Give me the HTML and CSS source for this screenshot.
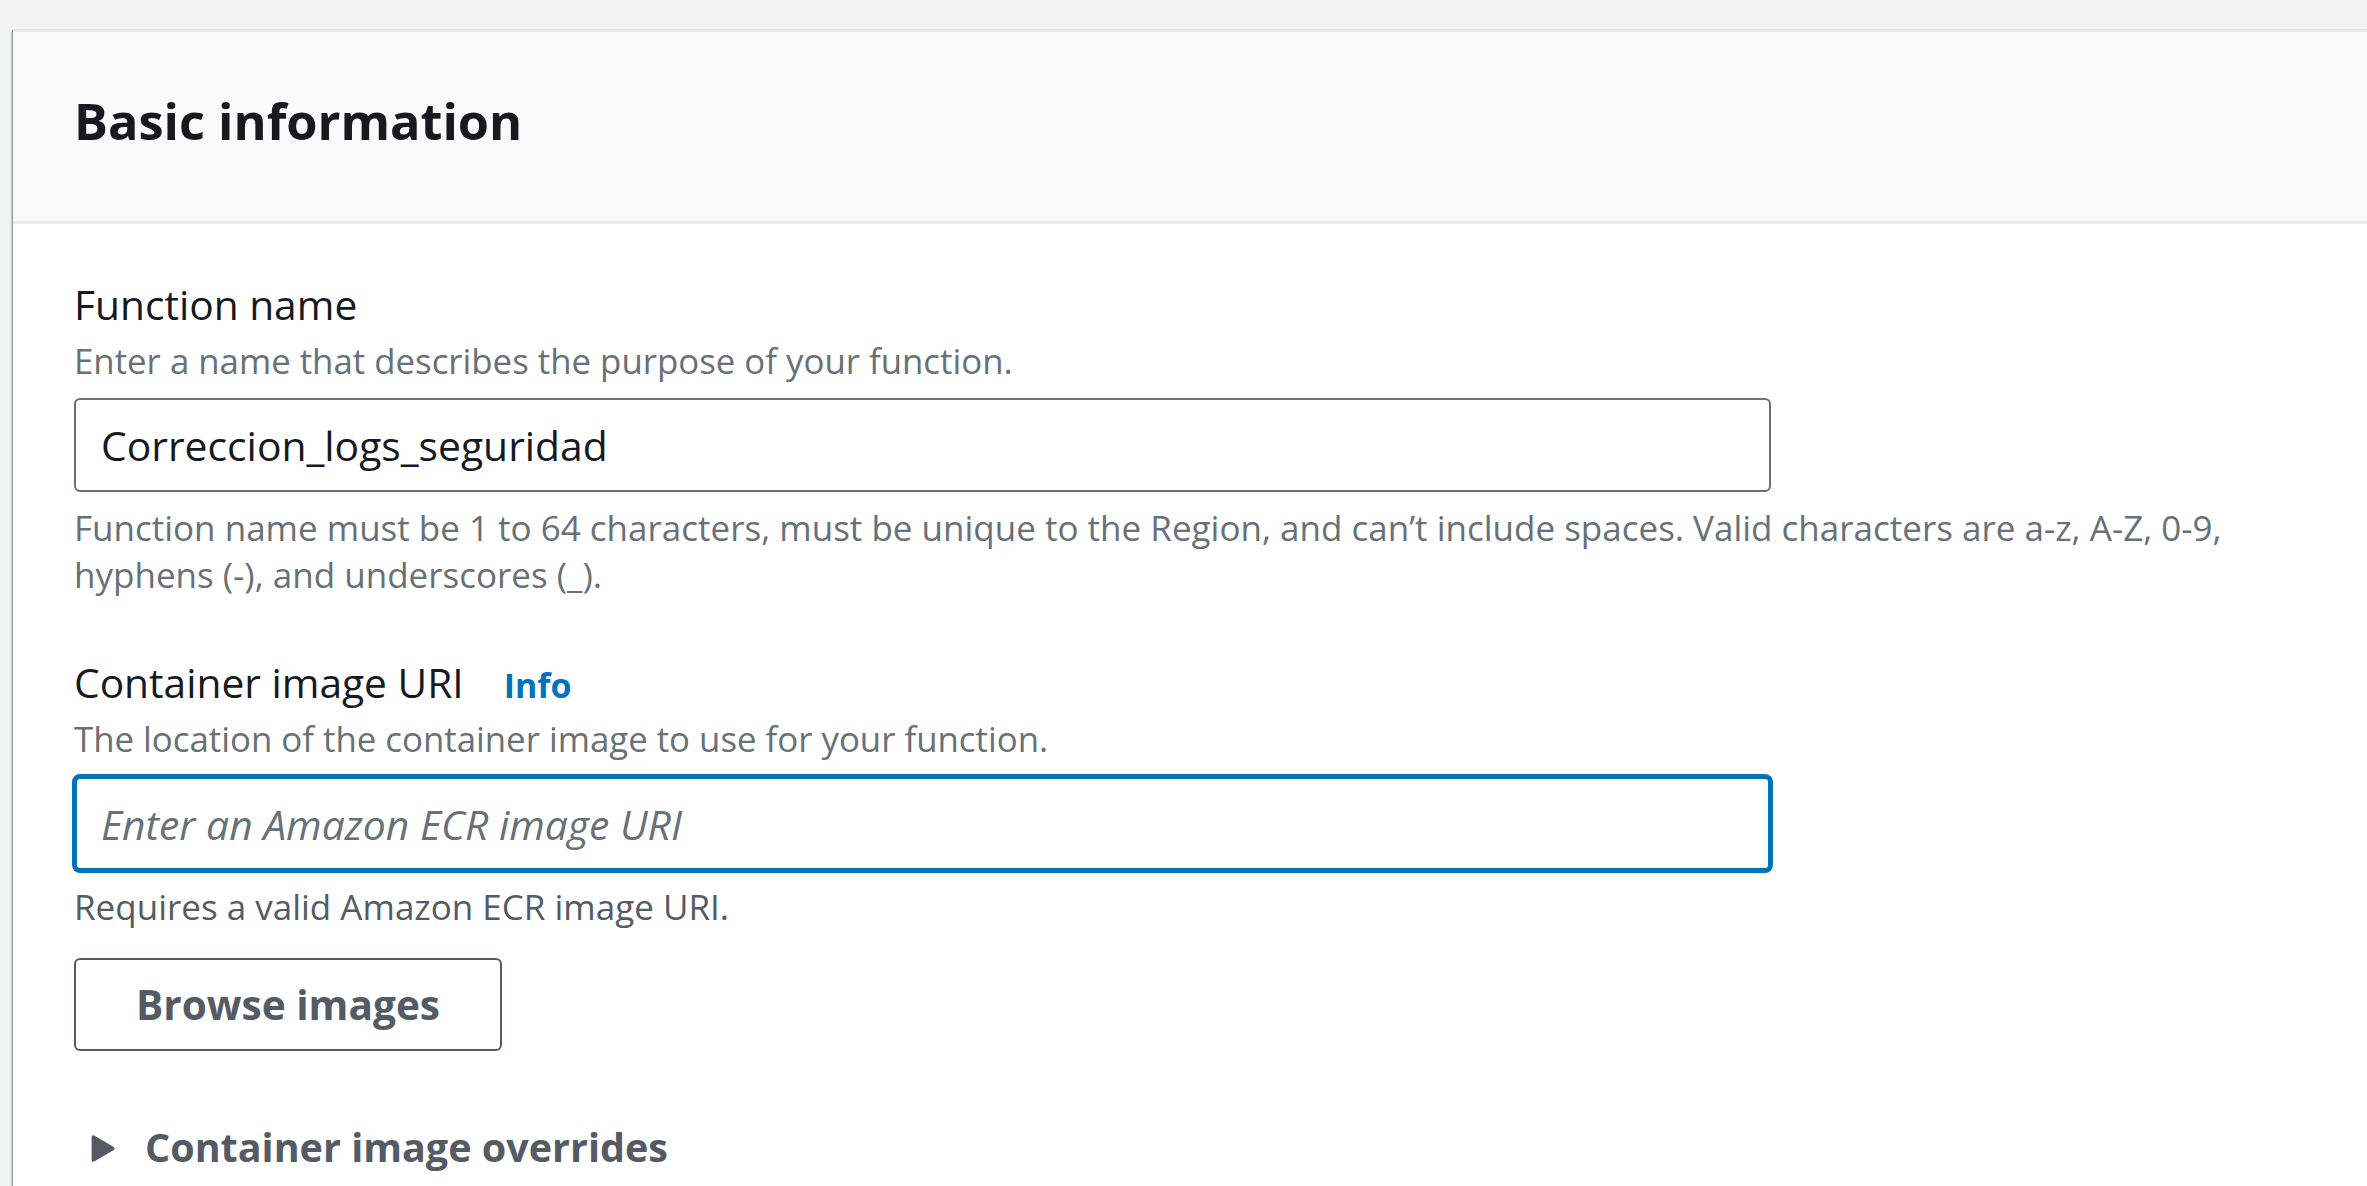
FILE: index.html
```html
<!DOCTYPE html>
<html lang="en">
<head>
<meta charset="utf-8">
<title>Basic information</title>
<link rel="stylesheet" href="styles.css">
</head>
<body>
<div class="page">
  <section class="card">
    <header class="card-header">
      <h2 class="card-title">Basic information</h2>
    </header>
    <div class="card-body">
      <div class="field">
        <label class="label" for="fn">Function name</label>
        <div class="desc">Enter a name that describes the purpose of your function.</div>
        <input class="input" id="fn" type="text" value="Correccion_logs_seguridad">
        <div class="hint">Function name must be 1 to 64 characters, must be unique to the Region, and can’t include spaces. Valid characters are a-z, A-Z, 0-9, hyphens (-), and underscores (_).</div>
      </div>
      <div class="field field-uri">
        <div class="label-row">
          <label class="label" for="uri">Container image URI</label>
          <a class="info" href="#">Info</a>
        </div>
        <div class="desc">The location of the container image to use for your function.</div>
        <input class="input input-focus" id="uri" type="text" placeholder="Enter an Amazon ECR image URI">
        <div class="hint hint-dark">Requires a valid Amazon ECR image URI.</div>
        <button class="btn" type="button">Browse images</button>
      </div>
      <div class="expander">
        <svg class="caret" width="25" height="31" viewBox="0 0 24 30" aria-hidden="true">
          <path d="M3 2.5 L21.5 13.2 Q24 15 21.5 16.8 L3 27.5 Q0.5 28.8 0.5 26 L0.5 4 Q0.5 1.2 3 2.5 Z" fill="#545b64"/>
        </svg>
        <span class="expander-text">Container image overrides</span>
      </div>
    </div>
  </section>
</div>
</body>
</html>
```
FILE: styles.css
```css
html, body {
  margin: 0;
  padding: 0;
  background: #f2f3f3;
  overflow: hidden;
}
body {
  font-family: "Open Sans", "Noto Sans", sans-serif;
  color: #16191f;
}
.page {
  padding: 30px 0 0 13px;
}
.card {
  background: #ffffff;
  border-top: 2px solid #eaeded;
  box-shadow: -1px 0 1px rgba(0, 28, 36, 0.35), -2px 1px 2px rgba(0, 28, 36, 0.12);
  margin-right: -20px;
  min-height: 1200px;
}
.card-header {
  background: #fafafa;
  border-bottom: 3px solid #eaeded;
  padding: 54px 60px 65px 61px;
}
.card-title {
  margin: 0;
  font-size: 50.5px;
  line-height: 70px;
  font-weight: 700;
  color: #16191f;
}
.card-body {
  padding: 52px 60px 0 61px;
}
.field {
  display: flex;
  flex-direction: column;
  align-items: flex-start;
}
.field-uri {
  margin-top: 56px;
}
.label-row {
  display: flex;
  align-items: baseline;
  gap: 40px;
}
.label {
  font-size: 40.7px;
  line-height: 56px;
  color: #16191f;
}
.info {
  font-size: 34px;
  font-weight: 700;
  color: #0073bb;
  text-decoration: none;
}
.desc {
  margin-top: 5px;
  font-size: 34.8px;
  line-height: 48px;
  color: #687078;
}
.input {
  box-sizing: border-box;
  margin: 13px 0 0 0;
  width: 1697px;
  height: 94px;
  border: 2px solid #687078;
  border-radius: 6px;
  padding: 0 25px;
  font-family: "Open Sans", "Noto Sans", sans-serif;
  font-size: 40.8px;
  line-height: 90px;
  color: #16191f;
  background: #ffffff;
  outline: none;
}
.input-focus {
  height: 95px;
  border: 3px solid #0073bb;
  padding: 0 24px;
  box-shadow: 0 0 0 2px #0073bb;
}
.input::placeholder {
  font-style: italic;
  color: #687078;
  opacity: 1;
}
.hint {
  margin-top: 12px;
  font-size: 35px;
  line-height: 47px;
  color: #687078;
  max-width: 2200px;
}
.hint-dark {
  color: #545b64;
  margin-top: 12px;
}
.btn {
  box-sizing: border-box;
  margin-top: 28px;
  height: 93px;
  padding: 0 60px;
  border: 2px solid #545b64;
  border-radius: 6px;
  background: #ffffff;
  font-family: "Open Sans", "Noto Sans", sans-serif;
  font-size: 40.6px;
  font-weight: 700;
  line-height: 89px;
  color: #545b64;
}
.expander {
  display: flex;
  align-items: center;
  margin-top: 68px;
  padding-left: 17px;
  height: 56px;
}
.caret {
  display: block;
  margin-top: 3px;
}
.expander-text {
  margin-left: 29px;
  font-size: 39.5px;
  font-weight: 700;
  line-height: 56px;
  color: #545b64;
}
```
